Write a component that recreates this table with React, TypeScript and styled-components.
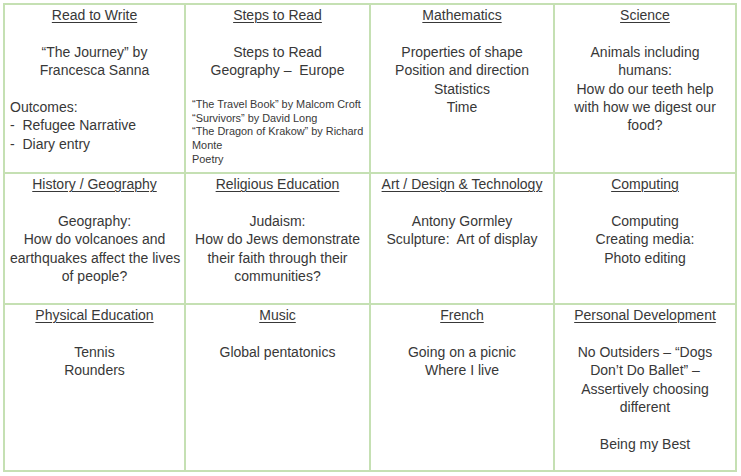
import React from "react";
import styled, { createGlobalStyle } from "styled-components";

const Global = createGlobalStyle`
  html, body { margin: 0; padding: 0; background: #ffffff; }
  body { font-family: "Liberation Sans", Arial, sans-serif; }
`;

const Page = styled.div`
  padding: 3px 0 0 3px;
`;

const Grid = styled.div`
  display: grid;
  grid-template-columns: 179px 183px 182px 180px;
  grid-template-rows: 167px 129px 165px;
  gap: 2px;
  padding: 2px;
  width: max-content;
  background: #c5e0b3;
`;

const Cell = styled.div`
  background: #ffffff;
  padding: 1px 5px 0 5px;
  display: flex;
  flex-direction: column;
  color: #383838;
  font-size: 14px;
  line-height: 18.4px;
  overflow: visible;
`;

const Heading = styled.div`
  text-align: center;
  text-decoration: underline;
  text-underline-offset: 2px;
  text-decoration-thickness: 1px;
  white-space: pre;
`;

const Line = styled.div<{ $align: "center" | "left" }>`
  text-align: ${(p) => p.$align};
  white-space: pre;
`;

const Blank = styled.div`
  height: 18.4px;
`;

const SmallLine = styled.div`
  font-size: 10.9px;
  line-height: 13.7px;
  padding-left: 1px;
  white-space: pre;
`;

type Block =
  | { kind: "center"; lines: string[] }
  | { kind: "left"; lines: string[] }
  | { kind: "small"; lines: string[] }
  | { kind: "blank" };

type Subject = { title: string; body: Block[] };

const blank: Block = { kind: "blank" };

const subjects: Subject[] = [
  {
    title: "Read to Write",
    body: [
      { kind: "center", lines: ["\u201CThe Journey\u201D by", "Francesca Sanna"] },
      blank,
      { kind: "left", lines: ["Outcomes:", "-  Refugee Narrative", "-  Diary entry"] },
    ],
  },
  {
    title: "Steps to Read",
    body: [
      { kind: "center", lines: ["Steps to Read", "Geography \u2013  Europe"] },
      blank,
      {
        kind: "small",
        lines: [
          "\u201CThe Travel Book\u201D by Malcom Croft",
          "\u201CSurvivors\u201D by David Long",
          "\u201CThe Dragon of Krakow\u201D by Richard",
          "Monte",
          "Poetry",
        ],
      },
    ],
  },
  {
    title: "Mathematics",
    body: [
      {
        kind: "center",
        lines: ["Properties of shape", "Position and direction", "Statistics", "Time"],
      },
    ],
  },
  {
    title: "Science",
    body: [
      {
        kind: "center",
        lines: [
          "Animals including",
          "humans:",
          "How do our teeth help",
          "with how we digest our",
          "food?",
        ],
      },
    ],
  },
  {
    title: "History / Geography",
    body: [
      {
        kind: "center",
        lines: [
          "Geography:",
          "How do volcanoes and",
          "earthquakes affect the lives",
          "of people?",
        ],
      },
    ],
  },
  {
    title: "Religious Education",
    body: [
      {
        kind: "center",
        lines: [
          "Judaism:",
          "How do Jews demonstrate",
          "their faith through their",
          "communities?",
        ],
      },
    ],
  },
  {
    title: "Art / Design & Technology",
    body: [{ kind: "center", lines: ["Antony Gormley", "Sculpture:  Art of display"] }],
  },
  {
    title: "Computing",
    body: [{ kind: "center", lines: ["Computing", "Creating media:", "Photo editing"] }],
  },
  {
    title: "Physical Education",
    body: [{ kind: "center", lines: ["Tennis", "Rounders"] }],
  },
  {
    title: "Music",
    body: [{ kind: "center", lines: ["Global pentatonics"] }],
  },
  {
    title: "French",
    body: [{ kind: "center", lines: ["Going on a picnic", "Where I live"] }],
  },
  {
    title: "Personal Development",
    body: [
      {
        kind: "center",
        lines: [
          "No Outsiders \u2013 \u201CDogs",
          "Don\u2019t Do Ballet\u201D \u2013",
          "Assertively choosing",
          "different",
        ],
      },
      blank,
      { kind: "center", lines: ["Being my Best"] },
    ],
  },
];

function renderBlock(b: Block, i: number) {
  if (b.kind === "blank") return <Blank key={i} />;
  if (b.kind === "small")
    return (
      <React.Fragment key={i}>
        {b.lines.map((l, j) => (
          <SmallLine key={j}>{l}</SmallLine>
        ))}
      </React.Fragment>
    );
  return (
    <React.Fragment key={i}>
      {b.lines.map((l, j) => (
        <Line key={j} $align={b.kind}>
          {l}
        </Line>
      ))}
    </React.Fragment>
  );
}

export default function App() {
  return (
    <>
      <Global />
      <Page>
        <Grid>
          {subjects.map((s) => (
            <Cell key={s.title}>
              <Heading>{s.title}</Heading>
              <Blank />
              {s.body.map(renderBlock)}
            </Cell>
          ))}
        </Grid>
      </Page>
    </>
  );
}
